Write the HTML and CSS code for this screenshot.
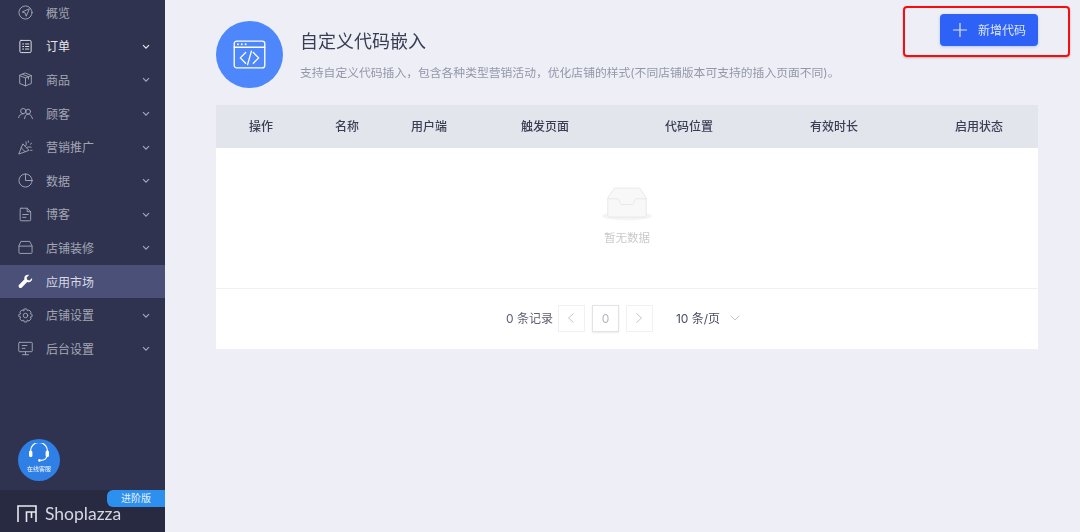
FILE: index.html
```html
<!DOCTYPE html>
<html lang="zh-CN">
<head>
<meta charset="utf-8">
<title>自定义代码嵌入</title>
<link rel="stylesheet" href="styles.css">
</head>
<body>
<div class="app">
  <aside class="sidebar">
    <nav class="nav">
      <a class="item"><svg class="ico" viewBox="0 0 16 16"><circle cx="8" cy="8" r="7"/><path d="M11.800 4.200 4.400 7.400l3.200 1 1 3.200z"/></svg><span class="label">概览</span></a>
      <a class="item open"><svg class="ico" viewBox="0 0 16 16"><rect x="2" y="1.500" width="12" height="13" rx="1.400"/><path d="M5 5.300h1M8 5.300h3.500M5 8h1M5 10.700h1M8 10.700h3.500M8 8h3.500"/></svg><span class="label">订单</span><svg class="chev" viewBox="0 0 8 6"><path d="M1 1.200 4 4.200 7 1.200"/></svg></a>
      <a class="item"><svg class="ico" viewBox="0 0 16 16"><path d="M8 1.200 14.200 3.800v8.400L8 14.800l-6.200-2.600V3.800zM1.800 3.800 8 6.400l6.200-2.600M8 6.400v8.400M5 2.500l6.200 2.600v2.400"/></svg><span class="label">商品</span><svg class="chev" viewBox="0 0 8 6"><path d="M1 1.200 4 4.200 7 1.200"/></svg></a>
      <a class="item"><svg class="ico" viewBox="0 0 16 16"><circle cx="5.600" cy="5.400" r="2.800"/><circle cx="10.800" cy="6" r="2.600"/><path d="M.6 12.500C1.200 9.700 3.200 8.200 5.600 8.200M7 13.500c.3-2.900 1.800-4.900 3.800-4.900 2.200 0 3.800 1.800 4.600 4.900"/></svg><span class="label">顾客</span><svg class="chev" viewBox="0 0 8 6"><path d="M1 1.200 4 4.200 7 1.200"/></svg></a>
      <a class="item"><svg class="ico" viewBox="0 0 16 16"><path d="M5 4.500.8 15l10.500-3.800zM3.400 8.300l4.300 4.300M8 6.500c1-1.200 1-2.800.5-4.500M9.500 8c1.200-.8 2.800-.8 4.500-.3M11 1v1.500M14.500 3.500l-1.300 1M15 11h-1.500"/></svg><span class="label">营销推广</span><svg class="chev" viewBox="0 0 8 6"><path d="M1 1.200 4 4.200 7 1.200"/></svg></a>
      <a class="item"><svg class="ico" viewBox="0 0 16 16"><circle cx="8" cy="8" r="7"/><path d="M8 1v7h7"/></svg><span class="label">数据</span><svg class="chev" viewBox="0 0 8 6"><path d="M1 1.200 4 4.200 7 1.200"/></svg></a>
      <a class="item"><svg class="ico" viewBox="0 0 16 16"><path d="M3.300 1.300h6.400l3.800 3.700v8.700a1 1 0 0 1-1 1H3.300a1 1 0 0 1-1-1V2.300a1 1 0 0 1 1-1zM9.700 1.300V5h3.800M5 8h6M5 11h3.500"/></svg><span class="label">博客</span><svg class="chev" viewBox="0 0 8 6"><path d="M1 1.200 4 4.200 7 1.200"/></svg></a>
      <a class="item"><svg class="ico" viewBox="0 0 16 16"><path d="M3.500 1.500h9l2.500 5v6.800a1 1 0 0 1-1 1H2a1 1 0 0 1-1-1V6.500zM1 6.500h14"/></svg><span class="label">店铺装修</span><svg class="chev" viewBox="0 0 8 6"><path d="M1 1.200 4 4.200 7 1.200"/></svg></a>
      <a class="item active"><svg class="ico solid" viewBox="0 0 16 16"><path d="M15 4.200 12.300 6.800 9.800 6.200 9.200 3.700 11.800 1C9.600.4 7.300 1.400 6.800 3.600c-.2.800-.1 1.500.1 2.100L1.200 11.400c-.8.800-.8 2 0 2.900.8.800 2.100.8 2.900 0l5.700-5.800c2.700.9 5.900-1 5.200-4.300z"/></svg><span class="label">应用市场</span></a>
      <a class="item"><svg class="ico" viewBox="0 0 16 16"><path d="M6.600 1h2.800l.5 2 1.800-.9 2.300 2.300-1 1.800 2 .6v2.400l-2 .5 1 1.900-2.300 2.300-1.800-1-.5 2H6.600l-.5-2-1.900 1-2.300-2.300 1-1.900-2-.5V6.800l2-.6-1-1.800 2.300-2.300 1.900.9z"/><circle cx="8" cy="8" r="2.400"/></svg><span class="label">店铺设置</span><svg class="chev" viewBox="0 0 8 6"><path d="M1 1.200 4 4.200 7 1.200"/></svg></a>
      <a class="item"><svg class="ico" viewBox="0 0 16 16"><rect x=".8" y="1.400" width="14.400" height="10" rx=".8"/><path d="M8 11.400v3M4.800 14.600h6.400M4.500 4.800h5M4.500 7.800h3"/></svg><span class="label">后台设置</span><svg class="chev" viewBox="0 0 8 6"><path d="M1 1.200 4 4.200 7 1.200"/></svg></a>
    </nav>
    <div class="support">
      <svg class="headset" viewBox="0 0 22 20"><path d="M2.500 9V8a8.500 8.500 0 0 1 17 0v1M19 13c-.5 2.500-2.500 4.200-6 4.400"/><rect class="fill" x="1" y="7.500" width="3.400" height="6.500" rx="1.600"/><rect class="fill" x="17.600" y="7.500" width="3.400" height="6.500" rx="1.600"/><circle class="fill" cx="11.500" cy="17.400" r="1.300"/></svg>
      <span class="support-text">在线客服</span>
    </div>
    <footer class="brand">
      <span class="plan">进阶版</span>
      <svg class="logo" viewBox="0 0 20 20"><path d="M1 18V2h18v16M9.500 18V8H19M14.500 8v6"/></svg>
      <span class="brand-name">Shoplazza</span>
    </footer>
  </aside>

  <main class="main">
    <header class="head">
      <div class="head-icon">
        <svg viewBox="0 0 34 30"><rect x="1.200" y="1.200" width="31.600" height="27.600" rx="2.500"/><path d="M1.200 7.500h31.600M13 13l-5.500 5.500L13 24M21 13l5.500 5.500L21 24M19 11.500 15 25.500"/><circle class="dot" cx="5" cy="4.400" r="1"/><circle class="dot" cx="9" cy="4.400" r="1"/><circle class="dot" cx="13" cy="4.400" r="1"/></svg>
      </div>
      <div class="head-text">
        <h1 class="title">自定义代码嵌入</h1>
        <p class="desc">支持自定义代码插入，包含各种类型营销活动，优化店铺的样式(不同店铺版本可支持的插入页面不同)。</p>
      </div>
      <div class="action">
        <button class="add"><svg class="plus" viewBox="0 0 14 14"><path d="M7 0v14M0 7h14"/></svg><span class="add-text">新增代码</span></button>
        <span class="mark"></span>
      </div>
    </header>

    <section class="table">
      <div class="thead">
        <span>操作</span><span>名称</span><span>用户端</span><span>触发页面</span><span>代码位置</span><span>有效时长</span><span class="last">启用状态</span>
      </div>
      <div class="empty">
        <svg class="inbox" viewBox="0 0 54 36"><ellipse class="shadow" cx="27" cy="30" rx="26" ry="4.500"/><path class="box" d="M14 1h26l7 10v18a2 2 0 0 1-2 2H9a2 2 0 0 1-2-2V11z"/><path class="tray" d="M7 12h11l3 6h12l3-6h11"/></svg>
        <span class="empty-text">暂无数据</span>
      </div>
      <div class="pager">
        <span class="count">0 条记录</span>
        <span class="pg"><svg viewBox="0 0 8 12"><path d="M6.500 1.500 1.500 6l5 4.500"/></svg></span>
        <span class="pg cur">0</span>
        <span class="pg"><svg viewBox="0 0 8 12"><path d="M1.500 1.500 6.500 6l-5 4.500"/></svg></span>
        <span class="size">10 条/页</span>
        <svg class="size-chev" viewBox="0 0 10 6"><path d="M.8.800 5 5 9.200.800"/></svg>
      </div>
    </section>
  </main>
</div>
</body>
</html>
```

FILE: styles.css
```css
* { box-sizing: border-box; }
html, body { margin: 0; height: 532px; overflow: hidden; }
body {
  background: #eeeff6;
  font-family: Inter, "Noto Sans CJK SC", "Noto Sans", sans-serif;
  filter: blur(0.35px);
}
.app { display: flex; height: 532px; }

/* sidebar */
.sidebar {
  width: 165px;
  flex: none;
  background: #2f334f;
  display: flex;
  flex-direction: column;
}
.nav { flex: 1; margin-top: -4px; display: flex; flex-direction: column; }
.item {
  height: 33.6px;
  flex: none;
  display: flex;
  align-items: center;
  padding: 0 15px 0 18px;
  color: #a3a6b5;
  font-size: 12px;
}
.ico {
  width: 15px;
  height: 15px;
  flex: none;
  fill: none;
  stroke: #a3a6b5;
  stroke-width: 1;
  stroke-linejoin: round;
  stroke-linecap: round;
}
.ico.solid { fill: #fff; stroke: none; }
.label { margin-left: 13px; flex: 1; padding-bottom: 1px; }
.chev {
  width: 8px;
  height: 6px;
  margin-top: 1px;
  fill: none;
  stroke: #a3a6b5;
  stroke-width: 1.2;
}
.item.open { color: #e6e7ec; }
.item.open .ico { stroke: #e6e7ec; }
.item.open .chev { stroke: #e6e7ec; }
.item.active { background: #4a5077; color: #d8dae6; }

.support {
  width: 42px;
  height: 42px;
  margin: 0 0 9px 18px;
  flex: none;
  border-radius: 50%;
  background: #2e7fe6;
  display: flex;
  flex-direction: column;
  align-items: center;
  padding-top: 4px;
  color: #fff;
}
.headset {
  width: 22px;
  height: 20px;
  flex: none;
  fill: none;
  stroke: #fff;
  stroke-width: 1.200;
}
.headset .fill { fill: #fff; stroke: none; }
.support-text { font-size: 6px; line-height: 8px; margin-top: 2px; }

.brand {
  position: relative;
  height: 42px;
  flex: none;
  background: #272a41;
  display: flex;
  align-items: center;
  padding: 6px 0 0 17px;
}
.plan {
  position: absolute;
  top: 0;
  right: 0;
  width: 58px;
  height: 17px;
  background: #2d8fee;
  border-radius: 6px 0 0 6px;
  color: #e6f1fd;
  font-size: 10px;
  line-height: 16px;
  text-align: center;
}
.logo {
  width: 20px;
  height: 20px;
  fill: none;
  stroke: #e8e9ee;
  stroke-width: 1.600;
}
.brand-name {
  margin-left: 8px;
  padding-bottom: 2px;
  color: #d6d8e0;
  font-family: Lato, sans-serif;
  font-size: 17.500px;
}

/* main */
.main { flex: 1; min-width: 0; padding: 21px 42px 0 51px; }
.head { display: flex; height: 84px; }
.head-icon {
  width: 67px;
  height: 67px;
  flex: none;
  border-radius: 50%;
  background: #4e87fb;
  display: flex;
  align-items: center;
  justify-content: center;
}
.head-icon svg {
  width: 33px;
  height: 29px;
  fill: none;
  stroke: #fff;
  stroke-width: 1.400;
  stroke-linecap: round;
  stroke-linejoin: round;
}
.head-icon .dot { fill: #fff; stroke: none; }
.head-text { margin-left: 18px; flex: 1; }
.title {
  margin: 7px 0 0 -1px;
  font-size: 18px;
  font-weight: 400;
  line-height: 28px;
  color: #3a3e55;
}
.desc {
  margin: 8px 0 0 -1px;
  font-size: 11.800px;
  line-height: 18px;
  color: #9296a8;
}
.action { position: relative; flex: none; margin-top: -7px; }
.add {
  width: 98px;
  height: 32px;
  border: 0;
  border-radius: 4px;
  background: #2e62f6;
  color: #dde6fd;
  font: 12px "Noto Sans CJK SC", sans-serif;
  display: flex;
  align-items: center;
  padding: 0 0 0 13px;
  box-shadow: 0 1px 3px rgba(46, 98, 246, .3);
}
.add-text { padding-bottom: 2px; }
.plus {
  width: 14px;
  height: 14px;
  margin-right: 11px;
  fill: none;
  stroke: #dde6fd;
  stroke-width: 1.200;
}
.mark {
  position: absolute;
  left: -37px;
  top: -8px;
  width: 167px;
  height: 51px;
  border: 2px solid #f80c0c;
  border-radius: 4px;
  box-shadow: 0 1px 2px rgba(0, 0, 0, .25);
}

/* table */
.table { background: #fff; }
.thead {
  height: 43px;
  padding-bottom: 2px;
  background: #e3e5ec;
  display: grid;
  grid-template-columns: 90px 82px 82px 150px 138px 152px 128px;
  align-items: center;
  text-align: center;
  font-size: 12px;
  font-weight: 500;
  color: #3a3e55;
}
.thead .last { padding-left: 10px; }
.empty {
  height: 141px;
  border-bottom: 1px solid #eff0f4;
  display: flex;
  flex-direction: column;
  align-items: center;
  padding-top: 39px;
}
.inbox { width: 52px; height: 35px; }
.inbox .shadow { fill: #f3f4f6; }
.inbox .box { fill: #f8f8f9; stroke: #e8e8ea; stroke-width: 1; }
.inbox .tray { fill: none; stroke: #e8e8ea; stroke-width: 1; }
.empty-text { font-size: 11.500px; line-height: 16px; margin-top: 8px; color: #c9c9cc; }
.pager {
  height: 60px;
  padding: 0 0 2px 290px;
  display: flex;
  align-items: center;
  font-size: 12px;
  color: #5e6170;
}
.count { margin-right: 5px; padding-bottom: 2px; }
.pg {
  width: 27px;
  height: 27px;
  margin-right: 7px;
  border: 1px solid #f1f1f3;
  display: flex;
  align-items: center;
  justify-content: center;
  color: #b4b6bf;
}
.pg svg {
  width: 8px;
  height: 12px;
  fill: none;
  stroke: #c4c6cd;
  stroke-width: 1;
}
.pg.cur { border-color: #e3e3e6; box-shadow: 0 1px 2px rgba(0, 0, 0, .08); }
.size { margin-left: 16px; padding-bottom: 2px; color: #4a4d60; }
.size-chev {
  width: 10px;
  height: 6px;
  margin-left: 10px;
  fill: none;
  stroke: #c4c6cd;
  stroke-width: 1;
}
```
